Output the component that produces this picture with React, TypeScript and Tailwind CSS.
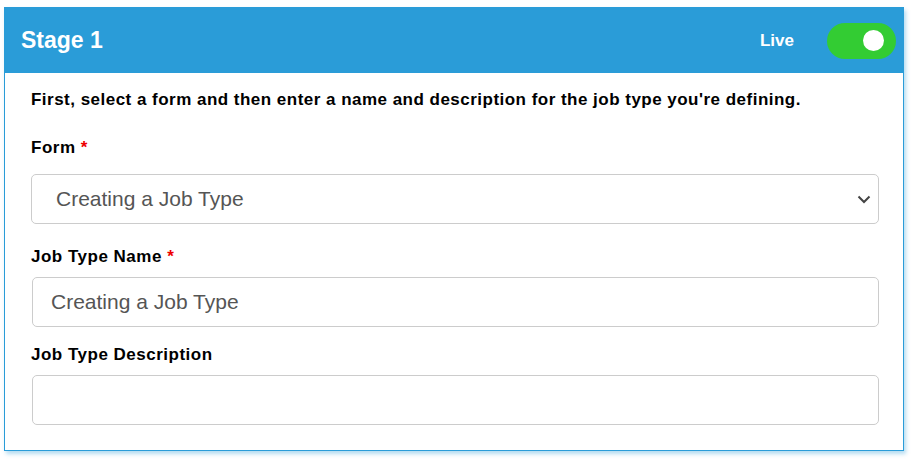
import React from "react";

export default function App() {
  return (
    <div className="w-[913px] h-[462px] bg-white pt-[7px] pl-[4px] font-['Liberation_Sans',Arial,sans-serif]">
      <div className="w-[900px] border border-[#2a9cd8] bg-white shadow-[2px_3px_4px_rgba(42,156,216,0.35)]">
        <div className="h-[65px] bg-[#2a9cd8] flex items-center pl-[16px] pr-[7px]">
          <div className="text-white font-bold text-[23px] leading-none">Stage 1</div>
          <div className="ml-auto flex items-center">
            <span className="text-white font-bold text-[17px] leading-none mr-[33px]">Live</span>
            <div className="w-[69px] h-[36px] rounded-full bg-[#33cc33] flex items-center justify-end pr-[12px]">
              <div className="w-[21px] h-[21px] rounded-full bg-white" />
            </div>
          </div>
        </div>
        <div className="pl-[26px] pr-[24px] pt-[16px] pb-[25px] text-black">
          <p className="text-[17px] tracking-[0.48px] font-bold leading-[22px]">
            First, select a form and then enter a name and description for the job type you're defining.
          </p>
          <div className="mt-[26px] text-[17px] tracking-[0.5px] font-bold leading-[22px]">
            Form <span className="text-[#e00]">*</span>
          </div>
          <div className="mt-[15px] h-[50px] border border-[#cccccc] rounded-[5px] flex items-center pl-[24px] pr-[7px] text-[21px] text-[#555]">
            <span>Creating a Job Type</span>
            <svg className="ml-auto" width="14" height="9" viewBox="0 0 14 9">
              <path d="M1.5 1.5 L7 7 L12.5 1.5" fill="none" stroke="#444" strokeWidth="2" />
            </svg>
          </div>
          <div className="mt-[22px] text-[17px] tracking-[0.5px] font-bold leading-[22px]">
            Job Type Name <span className="text-[#e00]">*</span>
          </div>
          <div className="mt-[9px] ml-[1px] h-[50px] border border-[#cccccc] rounded-[5px] flex items-center pl-[18px] text-[21px] text-[#555]">
            Creating a Job Type
          </div>
          <div className="mt-[17px] text-[17px] tracking-[0.5px] font-bold leading-[22px]">Job Type Description</div>
          <div className="mt-[9px] ml-[1px] h-[50px] border border-[#cccccc] rounded-[5px]" />
        </div>
      </div>
    </div>
  );
}
